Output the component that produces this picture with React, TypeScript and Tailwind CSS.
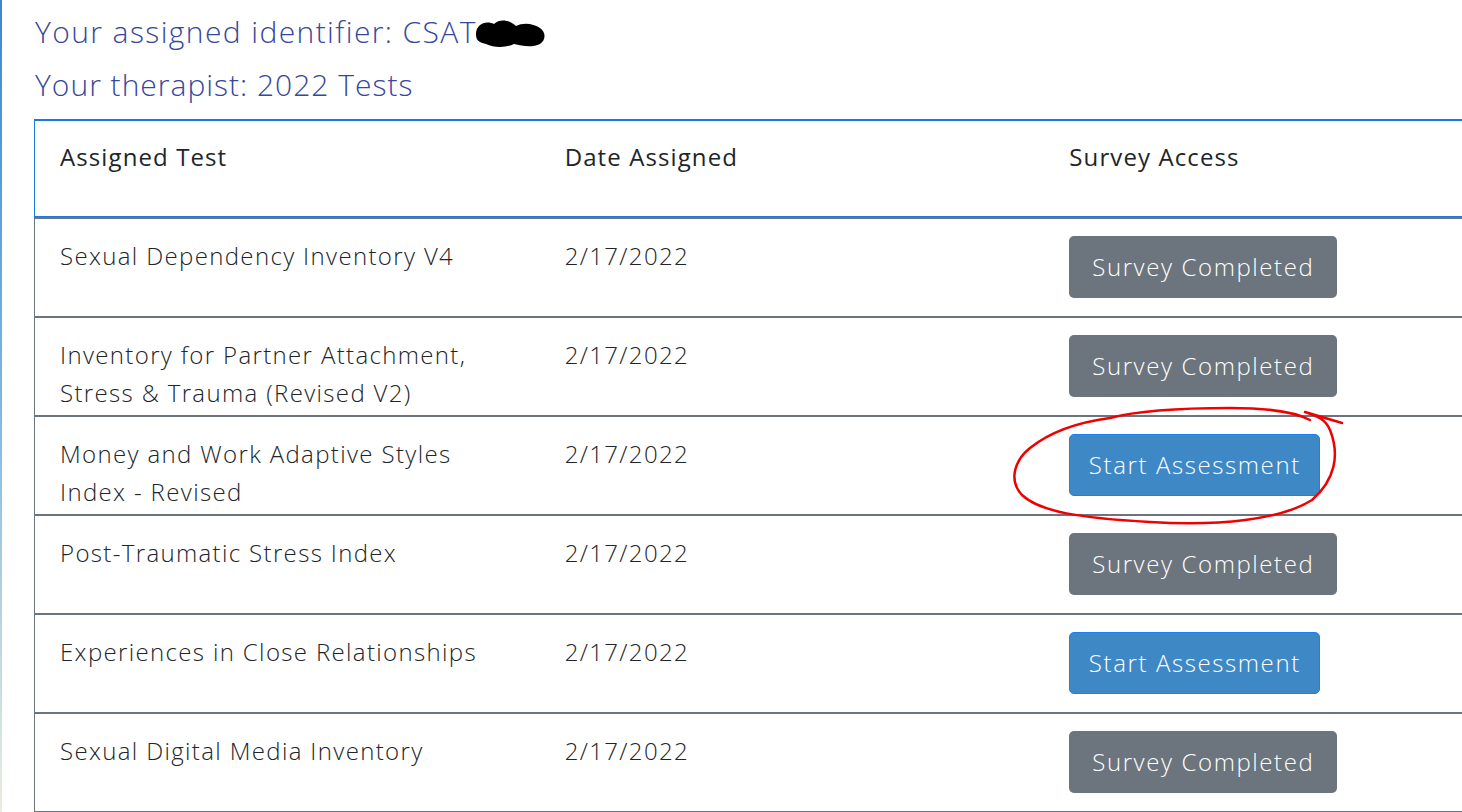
import React from "react";

const rows: { name: string[]; date: string; done: boolean }[] = [
  { name: ["Sexual Dependency Inventory V4"], date: "2/17/2022", done: true },
  { name: ["Inventory for Partner Attachment,", "Stress & Trauma (Revised V2)"], date: "2/17/2022", done: true },
  { name: ["Money and Work Adaptive Styles", "Index - Revised"], date: "2/17/2022", done: false },
  { name: ["Post-Traumatic Stress Index"], date: "2/17/2022", done: true },
  { name: ["Experiences in Close Relationships"], date: "2/17/2022", done: false },
  { name: ["Sexual Digital Media Inventory"], date: "2/17/2022", done: true },
];

export default function App() {
  return (
    <div
      className="relative w-[1462px] h-[812px] overflow-hidden bg-white flex"
      style={{ fontFamily: "'Open Sans', Lato, sans-serif" }}
    >
      <div className="w-[2px] h-full bg-gradient-to-b from-[#3a88cf] via-[#7fb6e0] to-[#e9eedd] shrink-0" />
      <div className="flex flex-col pl-[32px]">
        <div className="pt-[14px] pl-[1px] text-[30px] leading-[36px] font-light tracking-[1.4px] text-[#36479d] flex items-center">
          <span>Your assigned identifier: CSAT</span>
          <svg width="72" height="32" viewBox="0 0 72 32" className="-ml-[3px] mt-[4px]">
            <path d="M2 16 C2 6 12 2 20 6 C26 0 36 2 42 8 C50 4 60 6 66 10 C72 14 72 22 66 26 C58 30 48 28 40 26 C32 30 20 30 12 26 C4 24 2 22 2 16 Z" fill="#000" />
          </svg>
        </div>
        <div className="mt-[17px] pl-[1px] text-[30px] leading-[36px] font-light tracking-[1px] text-[#36479d]">
          Your therapist: 2022 Tests
        </div>
        <div className="mt-[16px] w-[1500px] border-t-2 border-[#1a78e0]">
          <div className="h-[96px] border-l border-[#1a78e0] flex text-[24px] leading-[38px] tracking-[1.1px] text-[#212529] font-normal relative">
            <div className="w-[505px] pl-[25px] pt-[17px]">Assigned Test</div>
            <div className="w-[505px] pl-[25px] pt-[17px]">Date Assigned</div>
            <div className="w-[490px] pl-[25px] pt-[17px]">Survey Access</div>
            <div className="absolute left-0 right-0 bottom-0 h-px bg-[#1a78e0]" />
          </div>
          <div className="border-l border-[#6c757d]">
            {rows.map((r, i) => (
              <div
                key={i}
                className="h-[99px] border-t-2 border-[#6c757d] flex text-[24px] leading-[38px] tracking-[1.35px] text-[#212529] font-light"
              >
                <div className="w-[505px] pl-[25px] pt-[18px]">
                  {r.name.map((l, j) => (
                    <div key={j}>{l}</div>
                  ))}
                </div>
                <div className="w-[505px] pl-[25px] pt-[18px]">{r.date}</div>
                <div className="w-[490px] pl-[25px] pt-[17px] tracking-[1.6px]">
                  {r.done ? (
                    <div className="inline-flex items-center justify-center h-[62px] w-[268px] rounded-[5px] bg-[#6c757d] text-white">
                      Survey Completed
                    </div>
                  ) : (
                    <div className="inline-flex items-center justify-center h-[62px] w-[251px] rounded-[5px] bg-[#3e88c6] border border-[#1a7ff0] text-white">
                      Start Assessment
                    </div>
                  )}
                </div>
              </div>
            ))}
            <div className="border-t-2 border-[#6c757d]" />
          </div>
        </div>
      </div>
      <svg
        className="absolute left-0 top-0 pointer-events-none"
        width="1462"
        height="812"
        viewBox="0 0 1462 812"
      >
        <path
          d="M1342 423 C1325 418 1312 414 1305 412 C1318 416 1326 420 1330 430 C1340 455 1335 480 1312 500 C1280 520 1220 526 1150 522 C1080 518 1040 512 1022 495 C1008 480 1015 460 1030 448 C1050 432 1080 422 1110 418 C1140 410 1180 408 1230 408 C1270 408 1295 412 1310 420"
          fill="none"
          stroke="#f00000"
          strokeWidth="2.5"
          strokeLinecap="round"
          strokeLinejoin="round"
        />
      </svg>
    </div>
  );
}
